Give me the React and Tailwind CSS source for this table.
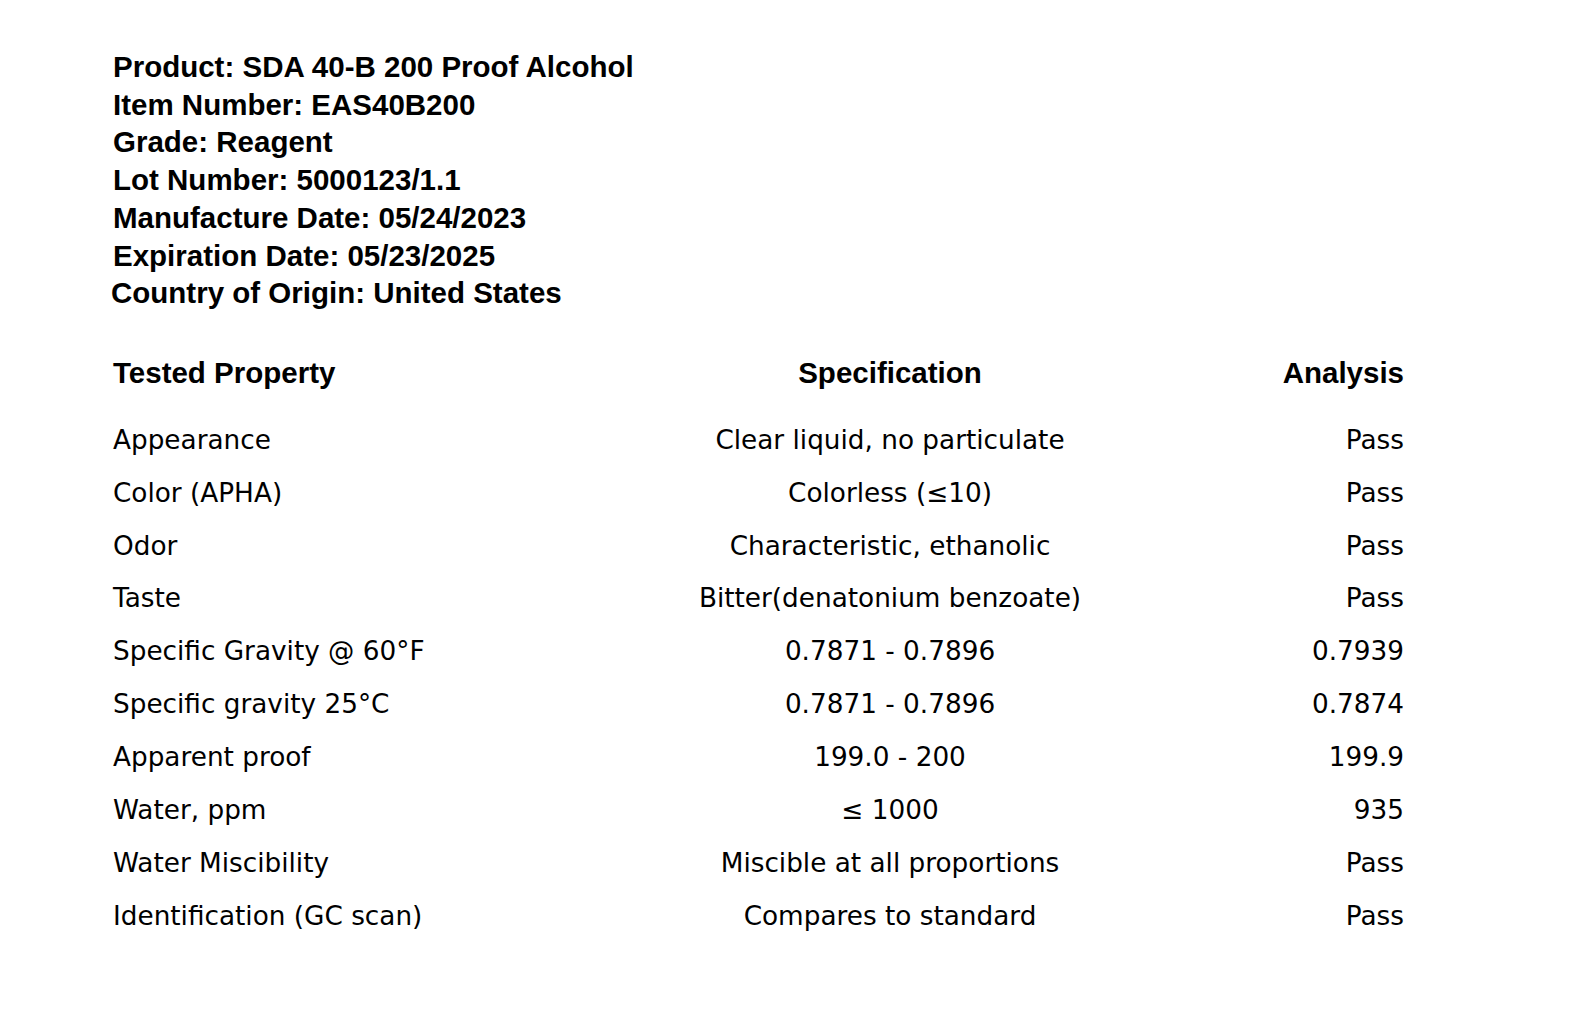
const info = [
  'Product: SDA 40-B 200 Proof Alcohol',
  'Item Number: EAS40B200',
  'Grade: Reagent',
  'Lot Number: 5000123/1.1',
  'Manufacture Date: 05/24/2023',
  'Expiration Date: 05/23/2025',
  'Country of Origin: United States',
]

const rows = [
  ['Appearance', 'Clear liquid, no particulate', 'Pass'],
  ['Color (APHA)', 'Colorless (≤10)', 'Pass'],
  ['Odor', 'Characteristic, ethanolic', 'Pass'],
  ['Taste', 'Bitter(denatonium benzoate)', 'Pass'],
  ['Specific Gravity @ 60°F', '0.7871 - 0.7896', '0.7939'],
  ['Specific gravity 25°C', '0.7871 - 0.7896', '0.7874'],
  ['Apparent proof', '199.0 - 200', '199.9'],
  ['Water, ppm', '≤ 1000', '935'],
  ['Water Miscibility', 'Miscible at all proportions', 'Pass'],
  ['Identification (GC scan)', 'Compares to standard', 'Pass'],
]

export default function App() {
  return (
    <div className="min-h-screen bg-white text-black pt-[48px] pl-[113px]">
      <div className="font-['Liberation_Sans',Arial,sans-serif] font-bold text-[29.5px] leading-[37.7px]">
        {info.map((line, i) => (
          <div key={i} className={i === info.length - 1 ? '-ml-[2px]' : ''}>
            {line}
          </div>
        ))}
      </div>

      <div className="mt-[42px] w-[1291px]">
        <div className="grid grid-cols-[551px_452px_1fr] font-['Liberation_Sans',Arial,sans-serif] font-bold text-[29.5px] leading-[38px] mb-[22px]">
          <div>Tested Property</div>
          <div className="text-center">Specification</div>
          <div className="text-right">Analysis</div>
        </div>
        <div className="font-['DejaVu_Sans',sans-serif] text-[26.3px]">
          {rows.map(([prop, spec, result]) => (
            <div key={prop} className="grid grid-cols-[551px_452px_1fr] h-[52.85px] leading-[52.85px]">
              <div className="whitespace-nowrap">{prop}</div>
              <div className="text-center whitespace-nowrap">{spec}</div>
              <div className="text-right whitespace-nowrap">{result}</div>
            </div>
          ))}
        </div>
      </div>
    </div>
  )
}
